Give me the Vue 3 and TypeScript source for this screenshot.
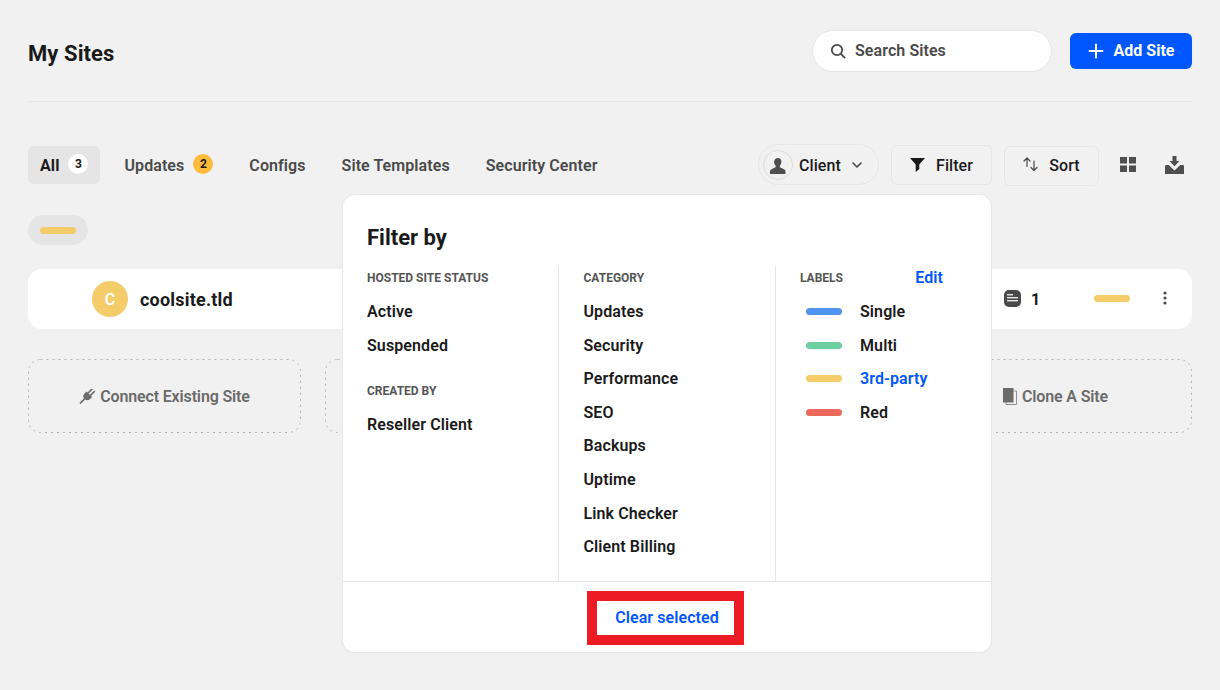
<script setup lang="ts">
const tabs = [
  { name: 'All', count: '3', active: true, badge: 'white' },
  { name: 'Updates', count: '2', active: false, badge: 'amber' },
  { name: 'Configs', count: '', active: false, badge: '' },
  { name: 'Site Templates', count: '', active: false, badge: '' },
  { name: 'Security Center', count: '', active: false, badge: '' },
]
const categories = ['Updates', 'Security', 'Performance', 'SEO', 'Backups', 'Uptime', 'Link Checker', 'Client Billing']
const labels = [
  { name: 'Single', color: '#4f94ef', on: false },
  { name: 'Multi', color: '#6ccf9f', on: false },
  { name: '3rd-party', color: '#f4cc69', on: true },
  { name: 'Red', color: '#ec675e', on: false },
]
</script>

<template>
  <div class="page">
    <header class="head">
      <h1 class="title">My Sites</h1>
      <div class="head-actions">
        <div class="search">
          <svg width="16" height="16" viewBox="0 0 16 16" fill="none" stroke="#4a4a4a" stroke-width="1.8"><circle cx="7" cy="7" r="5.2" /><path d="M11 11l3.6 3.6" stroke-linecap="round" /></svg>
          <span>Search Sites</span>
        </div>
        <button class="add">
          <svg width="16" height="16" viewBox="0 0 16 16" stroke="#fff" stroke-width="2" stroke-linecap="round"><path d="M8 1.500v13M1.500 8h13" /></svg>
          <span>Add Site</span>
        </button>
      </div>
    </header>

    <div class="toolbar">
      <nav class="tabs">
        <div v-for="t in tabs" :key="t.name" class="tab" :class="{ active: t.active }">
          <span>{{ t.name }}</span>
          <span v-if="t.count" class="count" :class="t.badge">{{ t.count }}</span>
        </div>
      </nav>
      <div class="tools">
        <div class="client">
          <span class="avatar-ring">
            <svg width="16" height="16" viewBox="0 0 16 16" fill="#4f4f4f"><path d="M8 0c2.100 0 3.400 1.600 3.400 3.800 0 1.500-.6 3-1.500 3.800v1.200c0 .7 1.200 1.100 3 1.900 1.400.6 2.600 1.200 2.600 2.300V16H0v-3c0-1.100 1.200-1.700 2.600-2.300 1.800-.8 3-1.200 3-1.900V7.600c-.9-.8-1.500-2.300-1.500-3.800C4.100 1.600 5.900 0 8 0z" /></svg>
          </span>
          <span>Client</span>
          <svg class="chev" width="10" height="6" viewBox="0 0 10 6" fill="none" stroke="#444" stroke-width="1.600" stroke-linecap="round" stroke-linejoin="round"><path d="M1 1l4 4 4-4" /></svg>
        </div>
        <div class="tool filter">
          <svg width="15" height="14" viewBox="0 0 15 14" fill="#1a1a1a"><path d="M0 0h15L9.300 6.500 9.300 11 5.700 14V6.500z" /></svg>
          <span>Filter</span>
        </div>
        <div class="tool sort">
          <svg class="sort-ico" width="15" height="14" viewBox="0 0 15 14" fill="none" stroke="#4a4a4a" stroke-width="1.200" stroke-linecap="round" stroke-linejoin="round"><path d="M4 9.500V1M1 4l3-3 3 3M11 4v9.500M8 10.500l3 3 3-3" /></svg>
          <span>Sort</span>
        </div>
        <svg class="grid-ico" width="16" height="15" viewBox="0 0 16 15" fill="#4f4f4f"><rect width="7" height="6.500" /><rect x="9" width="7" height="6.500" /><rect y="8.500" width="7" height="6.500" /><rect x="9" y="8.500" width="7" height="6.500" /></svg>
        <svg class="dl-ico" width="19" height="18" viewBox="0 0 19 18" fill="#4f4f4f"><path d="M7.500 0h4v5h3l-5 5.200-5-5.200h3z" /><path d="M0 10.500c0-1 .6-1.500 1.500-1.500h2.200l5.800 5.500L15.300 9h2.200c.9 0 1.500.5 1.500 1.500V18H0z" /></svg>
      </div>
    </div>

    <div class="chips">
      <div class="chip"><span class="bar yellow"></span></div>
    </div>

    <div class="site-row">
      <div class="site-main">
        <span class="site-avatar">C</span>
        <span class="site-name">coolsite.tld</span>
      </div>
      <div class="site-meta">
        <span class="doc">
          <svg width="11" height="8" viewBox="0 0 11 8" fill="#e8e8e8"><rect width="6" height="1.400" /><rect y="3" width="11" height="1.400" /><rect y="6" width="11" height="1.400" /></svg>
        </span>
        <span class="doc-num">1</span>
        <span class="bar yellow meta-bar"></span>
        <svg class="kebab" width="4" height="14" viewBox="0 0 4 14" fill="#4a4a4a"><circle cx="2" cy="2" r="1.600" /><circle cx="2" cy="7" r="1.600" /><circle cx="2" cy="12" r="1.600" /></svg>
      </div>
    </div>

    <div class="cards">
      <div v-for="n in 4" :key="n" class="card">
        <svg class="card-line" width="273" height="74" viewBox="0 0 273 74" fill="none"><rect x="0.5" y="0.5" width="272" height="73" rx="12" stroke="#b2b2b2" stroke-dasharray="2 4" /></svg>
        <template v-if="n === 1">
          <svg width="16" height="15" viewBox="0 0 16 16" fill="#6b6b6b">
            <g transform="rotate(45 8 8)">
              <rect x="7.100" y="11" width="1.800" height="7.500" />
              <path d="M3.800 4.500h8.400v3a4.200 4.200 0 0 1-8.400 0z" />
              <rect x="5.300" y="-2" width="1.800" height="6.500" />
              <rect x="8.900" y="-2" width="1.800" height="6.500" />
            </g>
          </svg>
          <span>Connect Existing Site</span>
        </template>
        <template v-if="n === 4">
          <svg width="14" height="17" viewBox="0 0 14 17" fill="none"><path d="M3 14.500V16.500H13.500V3H10.500" stroke="#8f8f8f" stroke-width="1" /><rect width="10.500" height="14.500" fill="#6b6b6b" /></svg>
          <span>Clone A Site</span>
        </template>
      </div>
    </div>

    <section class="pop">
      <h2 class="pop-title">Filter by</h2>
      <div class="cols">
        <div class="col">
          <h3 class="col-head">Hosted Site Status</h3>
          <div class="opt">Active</div>
          <div class="opt">Suspended</div>
          <h3 class="col-head second">Created By</h3>
          <div class="opt">Reseller Client</div>
        </div>
        <div class="col">
          <h3 class="col-head">Category</h3>
          <div v-for="c in categories" :key="c" class="opt">{{ c }}</div>
        </div>
        <div class="col">
          <div class="label-head">
            <h3 class="col-head">Labels</h3>
            <span class="edit">Edit</span>
          </div>
          <div v-for="l in labels" :key="l.name" class="opt label-opt" :class="{ on: l.on }">
            <span class="bar" :style="{ background: l.color }"></span>
            <span>{{ l.name }}</span>
          </div>
        </div>
      </div>
      <footer class="pop-foot">
        <div class="clear">Clear selected</div>
      </footer>
    </section>
  </div>
</template>

<style>
html, body { margin: 0; background: #f1f1f1; }
</style>

<style scoped>
* { box-sizing: border-box; }
.page {
  position: relative;
  width: 1220px;
  height: 690px;
  padding: 0 28px;
  overflow: hidden;
  background: #f1f1f1;
  color: #1a1a1a;
  font-family: Roboto, "Liberation Sans", sans-serif;
  font-size: 16px;
  font-weight: 600;
  letter-spacing: 0.08px;
}
.head {
  height: 102px;
  border-bottom: 1px solid #e6e6e6;
  display: flex;
  align-items: center;
  justify-content: space-between;
}
.title { margin: 0; font-size: 22px; font-weight: 700; line-height: 28px; position: relative; top: 3px; }
.head-actions { display: flex; align-items: center; gap: 18px; }
.search {
  width: 240px;
  height: 42px;
  padding-left: 17px;
  border: 1px solid #e6e6e6;
  border-radius: 21px;
  background: #fff;
  color: #4a4a4a;
  display: flex;
  align-items: center;
  gap: 9px;
}
.add {
  width: 122px;
  height: 36px;
  border: 0;
  border-radius: 6px;
  background: #0057ff;
  color: #fff;
  font: inherit;
  font-weight: 700;
  display: flex;
  align-items: center;
  justify-content: center;
  gap: 10px;
}
.toolbar {
  margin-top: 42px;
  height: 41px;
  display: flex;
  align-items: flex-start;
  justify-content: space-between;
}
.tabs { display: flex; align-items: center; gap: 12px; margin-top: 2px; }
.tab {
  height: 38px;
  padding: 0 12px;
  border-radius: 6px;
  color: #4a4a4a;
  display: flex;
  align-items: center;
  gap: 9px;
  letter-spacing: 0.08px;
}
.tab.active { background: #e5e5e5; color: #1a1a1a; font-weight: 700; }
.count {
  width: 20px;
  height: 20px;
  border-radius: 50%;
  font-size: 12px;
  font-weight: 700;
  color: #1a1a1a;
  display: flex;
  align-items: center;
  justify-content: center;
  position: relative;
  top: -1px;
}
.count.white { background: #fff; }
.count.amber { background: #fdba3b; }
.tools { display: flex; align-items: center; font-weight: 500; }
.client {
  width: 121px;
  height: 41px;
  padding-left: 4px;
  padding-top: 1px;
  border: 1px solid #e6e6e6;
  border-radius: 21px;
  display: flex;
  align-items: center;
  gap: 6px;
}
.avatar-ring {
  width: 30px;
  height: 30px;
  border: 1px solid #dcdcdc;
  border-radius: 50%;
  display: flex;
  align-items: flex-end;
  justify-content: center;
  padding-bottom: 5px;
  overflow: hidden;
}
.chev { margin-left: 5px; }
.tool {
  height: 40px;
  border: 1px solid #e6e6e6;
  border-radius: 6px;
  display: flex;
  align-items: center;
  justify-content: center;
  padding-top: 1px;
}
.filter { width: 101px; margin-left: 12px; gap: 11px; }
.sort { width: 95px; margin-left: 12px; gap: 11px; position: relative; top: 1px; padding-top: 0; }
.sort-ico { position: relative; top: -2px; }
.grid-ico { margin-left: 21px; }
.dl-ico { margin-left: 29px; margin-right: 8px; }
.chips { margin-top: 30px; height: 30px; display: flex; }
.chip {
  width: 60px;
  height: 30px;
  border-radius: 15px;
  background: #e5e5e5;
  display: flex;
  align-items: center;
  justify-content: center;
}
.bar { display: block; width: 36px; height: 7px; border-radius: 4px; }
.yellow { background: #f4cc69; }
.site-row {
  margin-top: 24px;
  height: 60px;
  padding: 0 25px 0 64px;
  border-radius: 14px;
  background: #fff;
  display: flex;
  align-items: center;
  justify-content: space-between;
}
.site-main { display: flex; align-items: center; gap: 12px; }
.site-avatar {
  width: 36px;
  height: 36px;
  border-radius: 50%;
  background: #f4cc69;
  color: #fff;
  display: flex;
  align-items: center;
  justify-content: center;
}
.site-name { font-size: 18px; font-weight: 700; letter-spacing: 0.2px; }
.site-meta { display: flex; align-items: center; position: relative; top: -1px; }
.doc {
  width: 17px;
  height: 17px;
  border-radius: 5px;
  background: #4a4a4a;
  display: flex;
  align-items: center;
  justify-content: center;
}
.doc-num { margin-left: 10px; font-weight: 700; position: relative; top: 1px; width: 9px; }
.meta-bar { margin-left: 54px; }
.kebab { margin-left: 33px; }
.cards {
  margin-top: 30px;
  display: grid;
  grid-template-columns: repeat(4, 273px);
  gap: 24px;
}
.card {
  position: relative;
  height: 74px;
  color: #6b6b6b;
  display: flex;
  align-items: center;
  justify-content: center;
  gap: 5px;
  letter-spacing: -0.15px;
}
.card-line { position: absolute; left: 0; top: 0; }
.pop {
  position: absolute;
  left: 343px;
  top: 195px;
  width: 648px;
  height: 457px;
  border-radius: 12px;
  background: #fff;
  box-shadow: 0 0 0 1px #e8e8e8, 0 1px 3px rgba(0, 0, 0, 0.04);
  display: flex;
  flex-direction: column;
}
.pop-title { margin: 0; padding: 30px 24px 0; font-size: 22px; font-weight: 700; line-height: 26px; letter-spacing: 0; }
.cols { margin-top: 15px; flex: 1; display: grid; grid-template-columns: 216px 217px 215px; }
.col { padding: 5px 0 0 24px; border-right: 1px solid #e6e6e6; }
.col:nth-child(2) { padding-left: 24.5px; }
.col:last-child { border-right: 0; }
.col-head {
  margin: 0 0 10px;
  font-size: 12px;
  font-weight: 700;
  line-height: 14px;
  text-transform: uppercase;
  color: #555;
  letter-spacing: 0;
}
.col-head.second { margin-top: 22px; }
.opt { height: 33.6px; line-height: 33.6px; color: #1a1a1a; letter-spacing: 0.1px; }
.label-head { display: flex; justify-content: space-between; padding-right: 48px; height: 24px; }
.edit { color: #0057ff; line-height: 14px; }
.label-opt { display: flex; align-items: center; gap: 18px; padding-left: 6px; }
.label-opt.on { color: #0057ff; }
.pop-foot {
  height: 71px;
  padding: 9px 0 7px;
  border-top: 1px solid #e6e6e6;
  display: flex;
  justify-content: center;
}
.clear {
  width: 157px;
  height: 54px;
  margin-left: -4px;
  padding: 0 0 2px 4px;
  border: 10px solid #ed1c24;
  color: #0057ff;
  display: flex;
  align-items: center;
  justify-content: center;
}
</style>
